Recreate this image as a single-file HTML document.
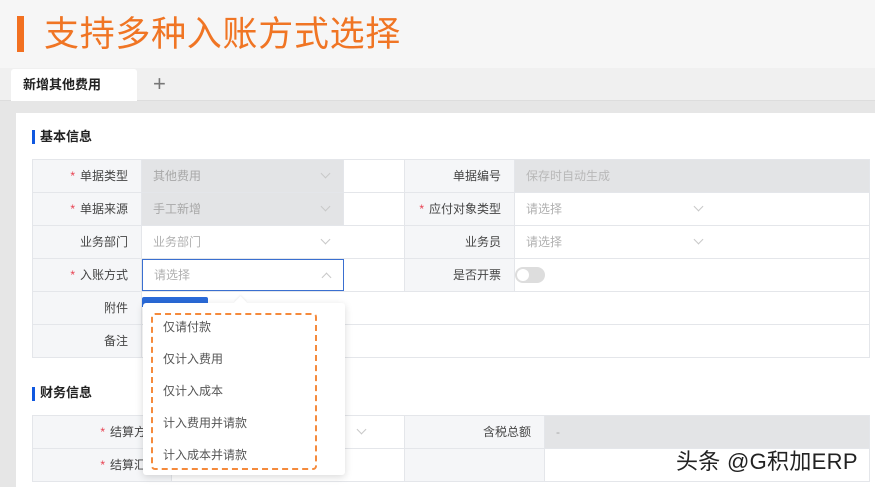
<!DOCTYPE html>
<html><head><meta charset="utf-8"><style>
*{margin:0;padding:0;box-sizing:border-box}
body{width:875px;height:487px;overflow:hidden;position:relative;background:#e6e6e6;font-family:"Liberation Sans","Noto Sans CJK SC",sans-serif;font-size:12px;color:#333}
.a{position:absolute}
.lbl{position:absolute;background:#f5f6f8;border-right:1px solid #e4e6ea;border-bottom:1px solid #e4e6ea;text-align:right;padding-right:13px;line-height:32px;color:#444}
.val{position:absolute;border-bottom:1px solid #e4e6ea;border-right:1px solid #e4e6ea;line-height:32px;padding-left:11px;color:#b0b0b0;background:#fff}
.g{background:#e3e4e6;color:#a8a8a8}
.s{color:#e84050;margin-right:5px}
.chev{position:absolute;width:7px;height:7px;border-right:1px solid #c8c8c8;border-bottom:1px solid #c8c8c8;transform:rotate(45deg)}
</style></head><body>
<div class="a" style="left:0;top:0;width:875px;height:68px;background:#f6f6f6"></div>
<div class="a" style="left:17px;top:16px;width:7px;height:36px;background:#f27020"></div>
<div class="a" style="left:44px;top:13px;font-size:35px;line-height:44px;color:#f07524;letter-spacing:0.7px">支持多种入账方式选择</div>
<div class="a" style="left:0;top:68px;width:875px;height:33px;background:#f0f0f0;border-bottom:1px solid #ddd"></div>
<div class="a" style="left:11px;top:69px;width:126px;height:32px;background:#fff;border-radius:3px 3px 0 0;font-weight:bold;font-size:13px;line-height:32px;padding-left:12px;color:#222">新增其他费用</div>
<div class="a" style="left:153px;top:70px;font-size:22px;color:#777;line-height:28px">+</div>
<div class="a" style="left:16px;top:113px;width:859px;height:374px;background:#fff"></div>
<div class="a" style="left:32px;top:130px;width:3px;height:14px;background:#1058e0"></div>
<div class="a" style="left:40px;top:128px;font-size:13px;font-weight:bold;line-height:18px;color:#222">基本信息</div>
<div class="a" style="left:32px;top:159px;width:838px;height:199px;border-top:1px solid #e4e6ea;border-left:1px solid #e4e6ea"></div>

<div class="lbl" style="left:33px;top:160px;width:109px;height:33px"><span class="s">*</span>单据类型</div>
<div class="val g" style="left:142px;top:160px;width:202px;height:33px">其他费用<i class="chev" style="left:180px;top:10px"></i></div>
<div class="val" style="left:344px;top:160px;width:61px;height:33px"></div>
<div class="lbl" style="left:405px;top:160px;width:110px;height:33px">单据编号</div>
<div class="val g" style="left:515px;top:160px;width:355px;height:33px;color:#b8b8b8">保存时自动生成</div>

<div class="lbl" style="left:33px;top:193px;width:109px;height:33px"><span class="s">*</span>单据来源</div>
<div class="val g" style="left:142px;top:193px;width:202px;height:33px">手工新增<i class="chev" style="left:180px;top:10px"></i></div>
<div class="val" style="left:344px;top:193px;width:61px;height:33px"></div>
<div class="lbl" style="left:405px;top:193px;width:110px;height:33px"><span class="s">*</span>应付对象类型</div>
<div class="val" style="left:515px;top:193px;width:355px;height:33px">请选择<i class="chev" style="left:180px;top:10px"></i></div>

<div class="lbl" style="left:33px;top:226px;width:109px;height:33px">业务部门</div>
<div class="val" style="left:142px;top:226px;width:263px;height:33px">业务部门<i class="chev" style="left:180px;top:10px"></i></div>
<div class="lbl" style="left:405px;top:226px;width:110px;height:33px">业务员</div>
<div class="val" style="left:515px;top:226px;width:355px;height:33px">请选择<i class="chev" style="left:180px;top:10px"></i></div>

<div class="lbl" style="left:33px;top:259px;width:109px;height:33px"><span class="s">*</span>入账方式</div>
<div class="val" style="left:142px;top:259px;width:263px;height:33px"></div>
<div class="a" style="left:142px;top:259px;width:202px;height:32px;border:1px solid #3a6fd0;line-height:30px;padding-left:11px;color:#b0b0b0">请选择<i class="chev" style="left:180px;top:14px;transform:rotate(-135deg)"></i></div>
<div class="lbl" style="left:405px;top:259px;width:110px;height:33px">是否开票</div>
<div class="val" style="left:515px;top:259px;width:355px;height:33px"><div class="a" style="left:0;top:8px;width:30px;height:16px;border-radius:8px;background:#ddd"><div class="a" style="left:2px;top:2px;width:12px;height:12px;border-radius:50%;background:#fff"></div></div></div>

<div class="lbl" style="left:33px;top:292px;width:109px;height:33px">附件</div>
<div class="val" style="left:142px;top:292px;width:728px;height:33px"></div>
<div class="a" style="left:142px;top:297px;width:66px;height:10px;background:#2a6ad8;border-radius:2px 2px 0 0"></div>
<div class="lbl" style="left:33px;top:325px;width:109px;height:33px">备注</div>
<div class="val" style="left:142px;top:325px;width:728px;height:33px"></div>

<div class="a" style="left:32px;top:387px;width:3px;height:14px;background:#1058e0"></div>
<div class="a" style="left:40px;top:384px;font-size:13px;font-weight:bold;line-height:18px;color:#222">财务信息</div>
<div class="a" style="left:32px;top:415px;width:838px;height:67px;border-top:1px solid #e4e6ea;border-left:1px solid #e4e6ea"></div>
<div class="lbl" style="left:33px;top:416px;width:139px;height:33px"><span class="s">*</span>结算方式</div>
<div class="val" style="left:172px;top:416px;width:233px;height:33px"><i class="chev" style="left:186px;top:10px"></i></div>
<div class="lbl" style="left:405px;top:416px;width:140px;height:33px">含税总额</div>
<div class="val g" style="left:545px;top:416px;width:325px;height:33px">-</div>
<div class="lbl" style="left:33px;top:449px;width:139px;height:33px"><span class="s">*</span>结算汇率</div>
<div class="val" style="left:172px;top:449px;width:233px;height:33px"></div>
<div class="lbl" style="left:405px;top:449px;width:140px;height:33px"></div>
<div class="val" style="left:545px;top:449px;width:325px;height:33px"></div>

<div class="a" style="left:143px;top:303px;width:202px;height:172px;background:#fff;border-radius:3px;box-shadow:0 2px 8px rgba(0,0,0,.15)"></div>
<div class="a" style="left:236px;top:298px;width:9px;height:9px;background:#fff;transform:rotate(45deg);box-shadow:-1px -1px 2px rgba(0,0,0,.06)"></div>
<div class="a" style="left:151px;top:313px;width:166px;height:157px;border:2.5px dashed #f58a3c;border-radius:4px"></div>
<div class="a" style="left:163px;top:311px;line-height:32px;font-size:12px;color:#555">仅请付款<br>仅计入费用<br>仅计入成本<br>计入费用并请款<br>计入成本并请款</div>

<div class="a" style="left:676px;top:448px;font-size:22px;line-height:28px;color:#222;letter-spacing:0.3px">头条 @G积加ERP</div>
</body></html>
